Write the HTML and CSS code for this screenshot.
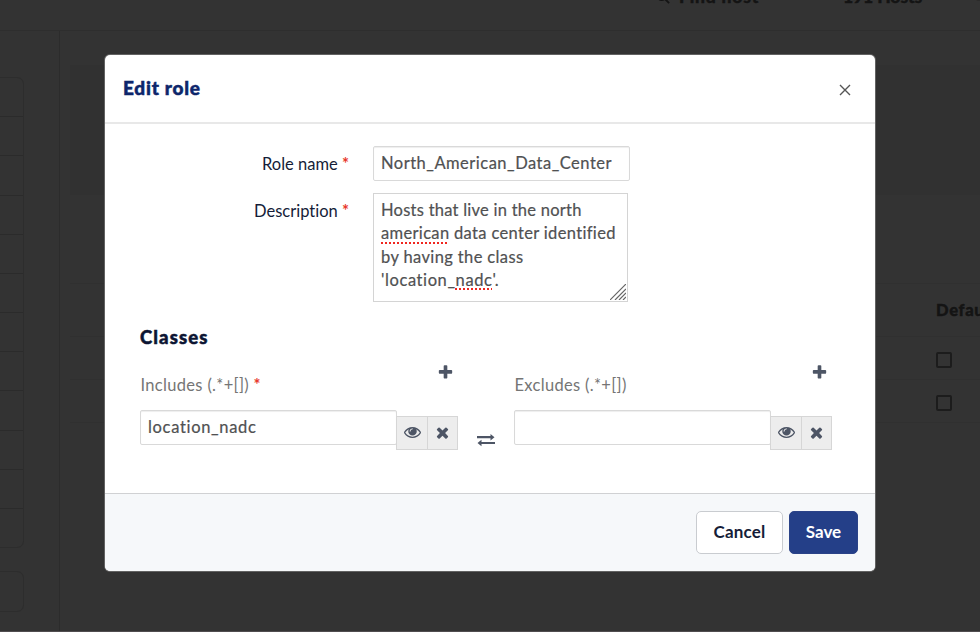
FILE: index.html
```html
<!DOCTYPE html>
<html lang="en">
<head>
<meta charset="utf-8">
<title>Edit role</title>
<link rel="stylesheet" href="styles.css">
</head>
<body>
<svg width="0" height="0" class="sprite">
  <symbol id="plus" viewBox="0 0 1792 1792"><path d="M1600 736v192q0 40-28 68t-68 28h-416v416q0 40-28 68t-68 28h-192q-40 0-68-28t-28-68v-416h-416q-40 0-68-28t-28-68v-192q0-40 28-68t68-28h416v-416q0-40 28-68t68-28h192q40 0 68 28t28 68v416h416q40 0 68 28t28 68z"/></symbol>
  <symbol id="times" viewBox="0 0 1792 1792"><path d="M1490 1322q0 40-28 68l-136 136q-28 28-68 28t-68-28l-294-294-294 294q-28 28-68 28t-68-28l-136-136q-28-28-28-68t28-68l294-294-294-294q-28-28-28-68t28-68l136-136q28-28 68-28t68 28l294 294 294-294q28-28 68-28t68 28l136 136q28 28 28 68t-28 68l-294 294 294 294q28 28 28 68z"/></symbol>
  <symbol id="eye" viewBox="0 64 1792 1792"><path d="M1664 960q-152-236-381-353 61 104 61 225 0 185-131.500 316.500t-316.500 131.500-316.500-131.500-131.500-316.500q0-121 61-225-229 117-381 353 133 205 333.500 326.500t434.500 121.500 434.500-121.500 333.500-326.500zm-720-384q0-20-14-34t-34-14q-125 0-214.500 89.500t-89.500 214.500q0 20 14 34t34 14 34-14 14-34q0-86 61-147t147-61q20 0 34-14t14-34zm848 384q0 34-20 69-140 230-376.500 368.500t-499.500 138.500-499.500-139-376.500-368q-20-35-20-69t20-69q140-229 376.500-368t499.500-139 499.500 139 376.500 368q20 35 20 69z"/></symbol>
</svg>
<div class="page">
  <header class="topbar">
    <svg class="search" viewBox="0 0 16 16"><circle cx="6.500" cy="6.500" r="5"/><path d="M10 10l5 5"/></svg>
    <span class="find">Find host</span><span class="hosts">191 Hosts</span><span class="more">4</span>
  </header>
  <div class="columns">
    <aside class="sidebar">
      <ul class="menu"><li></li><li></li><li></li><li></li><li></li><li></li><li></li><li></li><li></li><li></li><li></li><li></li></ul>
      <div class="menu-extra"></div>
    </aside>
    <main class="content">
      <div class="panel"></div>
      <div class="table">
        <div class="tr head">Default</div>
        <div class="tr"><i class="check"></i></div>
        <div class="tr"><i class="check"></i></div>
      </div>
    </main>
  </div>
</div>
<div class="overlay">
  <section class="modal">
    <header class="modal-head">
      <h2>Edit role</h2>
      <svg class="close" viewBox="0 0 12 12"><path d="M1 1l10 10M11 1L1 11"/></svg>
    </header>
    <div class="modal-body">
      <div class="row">
        <label><span>Role name</span> <b>*</b></label>
        <div class="input name">North_American_Data_Center</div>
      </div>
      <div class="row desc">
        <label><span>Description</span> <b>*</b></label>
        <div class="area">
          <div class="l1">Hosts that live in the north</div>
          <div class="l2"><u>american</u> data center identified</div>
          <div class="l3">by having the class</div>
          <div class="l4">'location_<u>nadc</u>'.</div>
          <svg class="grip" viewBox="0 0 16 16"><path d="M0 16L16 0M5 16L16 5M9 16l7-7M13 16l3-3"/></svg>
        </div>
      </div>
      <h3>Classes</h3>
      <div class="classes">
        <div class="group">
          <div class="group-head"><label><span>Includes (.*+[])</span> <b>*</b></label><svg class="icon plus"><use href="#plus"/></svg></div>
          <div class="field">
            <div class="input loc">location_nadc</div>
            <div class="tools"><span><svg class="icon eye"><use href="#eye"/></svg></span><span><svg class="icon"><use href="#times"/></svg></span></div>
          </div>
        </div>
        <svg class="swap" viewBox="0 0 18 12"><path d="M0 2.100h13.500V0l4 3.200-4 3.200V4.200H0zM18 7.900H4.500V5.800l-4 3.200 4 3.200V10H18z"/></svg>
        <div class="group">
          <div class="group-head"><label><span>Excludes (.*+[])</span></label><svg class="icon plus"><use href="#plus"/></svg></div>
          <div class="field">
            <div class="input"></div>
            <div class="tools"><span><svg class="icon eye"><use href="#eye"/></svg></span><span><svg class="icon"><use href="#times"/></svg></span></div>
          </div>
        </div>
      </div>
    </div>
    <footer class="modal-foot">
      <button class="cancel">Cancel</button>
      <button class="save">Save</button>
    </footer>
  </section>
</div>
</body>
</html>
```

FILE: styles.css
```css
* { box-sizing: border-box; }
body { margin: 0; width: 980px; height: 632px; overflow: hidden; background: #333; font-family: Lato, "Liberation Sans", sans-serif; font-size: 16.5px; color: #151d38; font-variant-ligatures: none; }
.sprite { position: absolute; }
.page { height: 632px; display: flex; flex-direction: column; border-bottom: 1px solid #504d4f; color: #141414; overflow: hidden; }
.topbar { height: 31px; flex: none; border-bottom: 1px solid #2e2e2e; display: flex; padding-left: 656px; font-weight: 900; font-size: 17.5px; line-height: 20px; white-space: nowrap; }
.topbar span { margin-top: -13.5px; flex: none; -webkit-text-stroke: .4px #141414; }
.search { width: 14px; height: 14px; margin: -10px 9px 0 0; flex: none; fill: none; stroke: #141414; stroke-width: 2.2; }
.find { width: 164px; letter-spacing: .8px; }
.hosts { width: 133px; letter-spacing: -.1px; }
.columns { flex: 1; display: flex; }
.sidebar { width: 60px; flex: none; border-right: 1px solid #2c2c2c; padding-top: 46px; }
.menu { list-style: none; margin: 0; padding: 0; width: 24px; height: 471px; border: 1px solid #2d2d2d; border-left: 0; border-radius: 0 7px 7px 0; display: flex; flex-direction: column; }
.menu li { flex: 1; border-bottom: 1px solid #2b2b2b; }
.menu li:last-child { border: 0; }
.menu-extra { width: 24px; height: 41px; margin-top: 23px; border: 1px solid #2d2d2d; border-left: 0; border-radius: 0 7px 7px 0; }
.content { flex: 1; min-width: 0; padding: 34px 0 0 10px; }
.panel { height: 130px; background: #313131; }
.table { margin-top: 88px; border-top: 1px solid #303030; }
.tr { height: 43px; border-bottom: 1px solid #303030; padding: 15px 0 0 866px; }
.head { height: 53px; padding-top: 14px; font-weight: 900; font-size: 16.5px; line-height: 24px; white-space: nowrap; overflow: hidden; letter-spacing: .7px; -webkit-text-stroke: .4px #141414; }
.check { display: block; width: 16px; height: 16px; border: 2px solid #1c1c1c; border-radius: 2px; }
.overlay { position: absolute; inset: 0; display: flex; justify-content: center; align-items: flex-start; padding-top: 55px; }
.modal { width: 770px; height: 516px; background: #fff; border-radius: 5px; overflow: hidden; display: flex; flex-direction: column; box-shadow: 0 0 0 1px #626262; }
.modal-head { height: 69px; border-bottom: 2px solid #e8e8e8; display: flex; justify-content: space-between; padding: 0 24px 0 18px; }
h2 { margin: 20px 0 0; font-size: 19px; line-height: 25px; font-weight: 900; color: #0d266b; letter-spacing: .75px; -webkit-text-stroke: .5px #0d266b; }
.close { width: 12px; height: 12px; margin-top: 29px; fill: none; stroke: #555; stroke-width: 1.4; }
.modal-body { height: 369px; padding: 22px 35px 0; }
.row { display: flex; height: 47px; }
.row label { width: 209px; text-align: right; line-height: 36px; margin-right: 24px; white-space: nowrap; }
label b { color: #e8382b; font-weight: 700; }
.input { width: 257px; height: 35px; border: 1px solid #d9d9d9; border-radius: 2px; background: #fff; box-shadow: inset 0 1px 1px #eee; color: #505152; line-height: 32px; padding-left: 7px; white-space: nowrap; -webkit-text-stroke: .2px #505152; }
.name { letter-spacing: .5px; }
.loc { letter-spacing: .68px; }
.desc { height: 109px; }
.area { width: 255px; height: 109px; border: 1px solid #d4d4d4; padding: 5px 0 0 7px; position: relative; color: #505152; line-height: 23.3px; white-space: nowrap; -webkit-text-stroke: .2px #505152; }
.l1 { letter-spacing: .25px; }
.l2 { letter-spacing: .34px; }
.l3 { letter-spacing: .37px; }
.l4 { letter-spacing: .6px; }
.area u { text-decoration: underline dotted #f02720 2px; text-underline-offset: 3px; text-decoration-skip-ink: none; }
.grip { position: absolute; right: 1px; bottom: 1px; width: 16px; height: 16px; stroke: #666; stroke-width: 1.2; fill: none; }
h3 { margin: 23px 0 0; font-size: 18.500px; line-height: 24px; font-weight: 900; color: #0c1533; letter-spacing: 1.1px; -webkit-text-stroke: .5px #0c1533; }
.classes { display: flex; }
.group { width: 318px; }
.group-head { display: flex; justify-content: space-between; padding: 15px 4px 0 0; height: 61px; color: #757575; }
.group-head label { line-height: 42px; letter-spacing: .32px; padding-left: .5px; }
.icon { width: 17px; height: 17px; fill: #4d5565; display: block; }
.field { display: flex; }
.tools { display: flex; margin: 6px 0 0 -1px; width: 62px; height: 34px; border: 1px solid #d6d6d6; background: #ededed; }
.tools span { width: 30px; padding-bottom: 1px; display: flex; align-items: center; justify-content: center; }
.tools span + span { border-left: 1px solid #d6d6d6; }
.swap { width: 18px; height: 12px; margin: 85px 19px 0 19px; fill: #4d5565; overflow: visible; }
.modal-foot { flex: 1; border-top: 1px solid #d0d1d3; background: #f6f8fa; display: flex; justify-content: flex-end; padding: 17px 17px 0 0; gap: 6px; }
button { height: 43px; padding: 0 0 2px; font: 700 17px Lato, sans-serif; border-radius: 5px; }
.cancel { width: 87px; background: #fff; border: 1px solid #c9ccd0; color: #151d38; letter-spacing: .2px; }
.save { width: 69px; background: #243f88; border: 1px solid #2b4388; color: #fff; }
```
